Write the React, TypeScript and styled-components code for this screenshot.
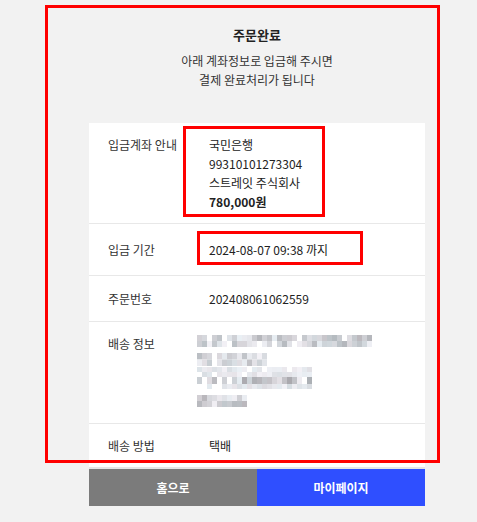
import styled, { createGlobalStyle } from "styled-components";

const GlobalStyle = createGlobalStyle`
  body {
    margin: 0;
    background: #f2f2f2;
    font-family: "Noto Sans CJK KR", "Noto Sans", sans-serif;
    color: #222;
  }
`;

const Page = styled.div`
  position: relative;
  height: 522px;
  padding-top: 25px;
  box-sizing: border-box;
`;

const Highlight = styled.div`
  position: absolute;
  border: 3px solid #ff0000;
  box-sizing: border-box;
  pointer-events: none;
`;

const PageFrame = styled(Highlight)`
  top: 5px;
  left: 45px;
  width: 395px;
  height: 458px;
`;

const Column = styled.div`
  width: 336px;
  margin-left: 89px;
  display: flex;
  flex-direction: column;
`;

const Title = styled.h1`
  margin: 0;
  font-size: 13px;
  line-height: 20px;
  font-weight: 700;
  text-align: center;
  color: #222;
`;

const Subtitle = styled.p`
  margin: 6px 0 0;
  font-size: 12px;
  line-height: 19px;
  text-align: center;
  color: #333;
`;

const Card = styled.div`
  margin-top: 34px;
  background: #fff;
  border-bottom: 2px solid #e6e6e6;
`;

const InfoRow = styled.div<{ $pad: number }>`
  display: grid;
  grid-template-columns: 101px 1fr;
  padding: ${(p) => p.$pad}px 19px;
  font-size: 12px;
  line-height: 19px;

  & + & {
    border-top: 1px solid #e8e8e8;
  }
`;

const Label = styled.div`
  color: #333;
`;

const Value = styled.div`
  position: relative;
  color: #222;
  display: flex;
  flex-direction: column;
`;

const Strong = styled.span`
  font-weight: 700;
`;

const Mark = styled(Highlight)<{ $l: number; $t: number; $w: number; $h: number }>`
  left: ${(p) => p.$l}px;
  top: ${(p) => p.$t}px;
  width: ${(p) => p.$w}px;
  height: ${(p) => p.$h}px;
`;

const Mosaic = styled.svg`
  display: block;
  margin: 1px 0 0 -12px;
`;

const Buttons = styled.div`
  display: grid;
  grid-template-columns: 1fr 1fr;
`;

const ActionButton = styled.button<{ $primary?: boolean }>`
  height: 37px;
  border: 0;
  padding: 0;
  background: ${(p) => (p.$primary ? "#2f4fff" : "#7b7b7b")};
  color: #fff;
  font-family: inherit;
  font-size: 12px;
  font-weight: 700;
  cursor: pointer;
`;

// blurred address block, drawn as pixel cells
const MOSAIC_LINES = [
  { y: 0, h: 12, w: 174, tone: 0.35 },
  { y: 18, h: 13, w: 67, tone: 0.3 },
  { y: 32, h: 10, w: 114, tone: 0.12 },
  { y: 42, h: 7, w: 114, tone: 0.45 },
  { y: 49, h: 5, w: 114, tone: 0.15 },
  { y: 60, h: 12, w: 49, tone: 0.35 },
];

const buildCells = () => {
  let seed = 7;
  const rnd = () => {
    seed = (seed * 9301 + 49297) % 233280;
    return seed / 233280;
  };
  const cells: { x: number; y: number; h: number; fill: string }[] = [];
  MOSAIC_LINES.forEach((line) => {
    const sub = line.h > 8 ? 2 : 1;
    const rowH = line.h / sub;
    for (let r = 0; r < sub; r++) {
      for (let x = 0; x < line.w; x += 5) {
        if (rnd() < 0.08) continue;
        const d = Math.min(1, rnd() * line.tone * 2);
        const base = 245 - Math.round(d * 85);
        const tint = Math.round(rnd() * 10);
        cells.push({
          x,
          y: line.y + r * rowH,
          h: rowH,
          fill: `rgb(${base - tint},${base - 3},${base + 2})`,
        });
      }
    }
  });
  return cells;
};

const cells = buildCells();

export default function App() {
  return (
    <Page>
      <GlobalStyle />
      <Column>
        <Title>주문완료</Title>
        <Subtitle>
          아래 계좌정보로 입금해 주시면
          <br />
          결제 완료처리가 됩니다
        </Subtitle>

        <Card>
          <InfoRow $pad={12}>
            <Label>입금계좌 안내</Label>
            <Value>
              <span>국민은행</span>
              <span>99310101273304</span>
              <span>스트레잇 주식회사</span>
              <Strong>780,000원</Strong>
              <Mark $l={-26} $t={-9} $w={142} $h={91} />
            </Value>
          </InfoRow>
          <InfoRow $pad={16}>
            <Label>입금 기간</Label>
            <Value>
              <span>2024-08-07 09:38 까지</span>
              <Mark $l={-12} $t={-9} $w={166} $h={34} />
            </Value>
          </InfoRow>
          <InfoRow $pad={13}>
            <Label>주문번호</Label>
            <Value>202408061062559</Value>
          </InfoRow>
          <InfoRow $pad={12}>
            <Label>배송 정보</Label>
            <Value>
              <Mosaic width="176" height="76" viewBox="0 0 176 76">
                {cells.map((c, i) => (
                  <rect key={i} x={c.x} y={c.y} width="5" height={c.h} fill={c.fill} />
                ))}
              </Mosaic>
            </Value>
          </InfoRow>
          <InfoRow $pad={12}>
            <Label>배송 방법</Label>
            <Value>택배</Value>
          </InfoRow>
        </Card>

        <Buttons>
          <ActionButton>홈으로</ActionButton>
          <ActionButton $primary>마이페이지</ActionButton>
        </Buttons>
      </Column>
      <PageFrame />
    </Page>
  );
}
